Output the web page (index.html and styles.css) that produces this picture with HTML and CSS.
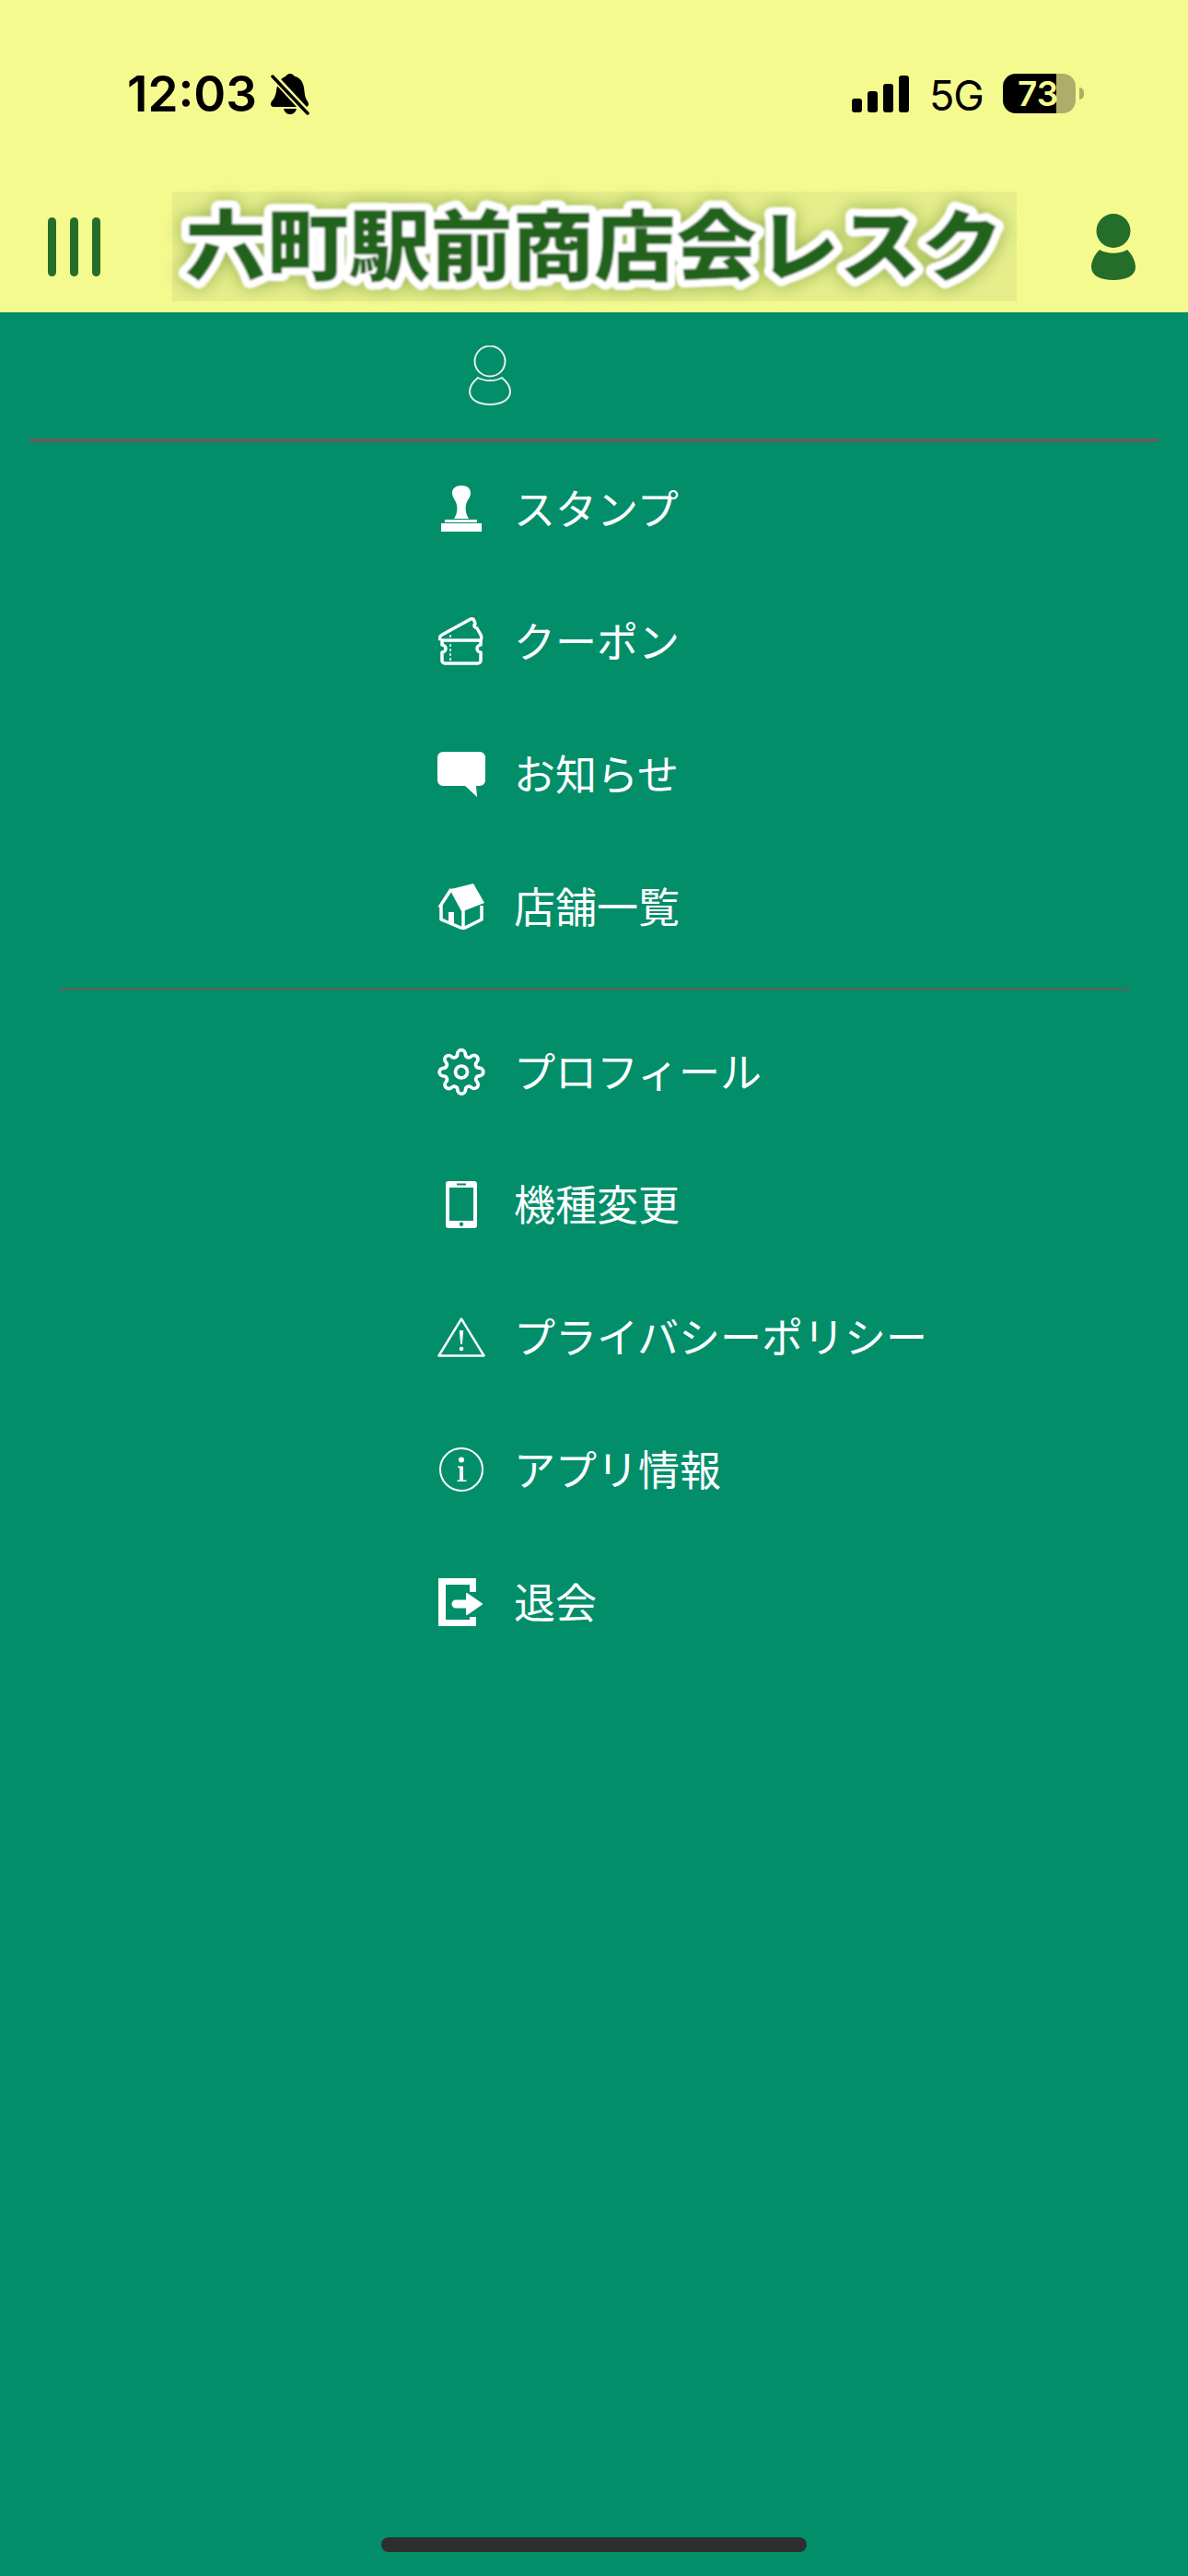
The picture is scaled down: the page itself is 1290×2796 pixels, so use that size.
FILE: index.html
```html
<!DOCTYPE html>
<html lang="ja">
<head>
    <meta charset="UTF-8">
    <meta name="viewport" content="width=device-width, initial-scale=1.0">
    <title>六町駅前商店会レスク</title>
    <link rel="stylesheet" href="styles.css">
</head>
<body>
    <div class="page">
        <header class="top">
            <div class="status">
                <div class="status-left">
                    <span class="time">12:03</span>
                    <svg class="bell" viewBox="0 0 42 45">
                        <path d="M21 0c3 0 4 2 5 3 6 1 9 6 10 12 1 7 1 11 4 15 2 3 1 6-2 6H3c-3 0-4-3-2-6 3-3 4-6 5-11 1-8 4-14 10-16 1-1 2-3 5-3z"/>
                        <path d="M14 38h14c-1 4-4 6-7 6s-6-2-7-6z"/>
                        <path class="bell-gap" d="M0 0l41 44"/>
                        <path class="bell-slash" d="M2 3l38 40"/>
                    </svg>
                </div>
                <div class="status-right">
                    <div class="signal"><i class="b1"></i><i class="b2"></i><i class="b3"></i><i class="b4"></i></div>
                    <span class="net">5G</span>
                    <div class="battery"><span class="battery-num">73</span></div>
                    <div class="battery-nub"></div>
                </div>
            </div>
            <div class="nav">
                <div class="burger"><i></i><i></i><i></i></div>
                <div class="logo">
                    <svg viewBox="0 0 917 119">
                        <defs>
                            <filter id="glow" x="-5%" y="-30%" width="110%" height="160%">
                                <feGaussianBlur in="SourceAlpha" stdDeviation="10" result="b"/>
                                <feFlood flood-color="#7d9f38" flood-opacity="0.8"/>
                                <feComposite in2="b" operator="in" result="g"/>
                                <feGaussianBlur in="SourceGraphic" stdDeviation="0.9" result="s"/>
                                <feMerge>
                                    <feMergeNode in="g"/>
                                    <feMergeNode in="s"/>
                                </feMerge>
                            </filter>
                        </defs>
                        <text class="logo-text" x="14" y="90" textLength="888" lengthAdjust="spacingAndGlyphs" filter="url(#glow)">六町駅前商店会レスク</text>
                    </svg>
                </div>
                <svg class="nav-user" viewBox="0 0 48 72">
                    <circle cx="24" cy="18.5" r="18.5"/>
                    <path d="M9 39c8 5 22 5 30 0 5 5 9 12 9 19 0 9-10 14-24 14S0 67 0 58c0-7 4-14 9-19z"/>
                </svg>
            </div>
        </header>

        <main class="menu">
            <div class="user">
                <svg class="user-icon" viewBox="0 0 46 66">
                    <circle cx="23" cy="17" r="16.5"/>
                    <path d="M10 35c7 4 19 4 26 0 5 4 9 10 9 15 0 9-10 14-22 14S1 59 1 50c0-5 4-11 9-15z"/>
                </svg>
            </div>
            <hr class="rule-main">
            <ul class="group">
                <li class="item">
                    <span class="icon">
                        <svg width="44" height="50" viewBox="0 0 44 50">
                            <path class="fill" d="M22 0c6 0 10 3 10 8 0 5-4 8-5 13-1 6 0 10 3 15H14c3-5 4-9 3-15-1-5-5-8-5-13 0-5 4-8 10-8z"/>
                            <rect class="fill" x="4" y="37" width="35" height="3"/>
                            <rect class="fill" y="41" width="44" height="9"/>
                        </svg>
                    </span>
                    <span class="label">スタンプ</span>
                </li>
                <li class="item">
                    <span class="icon">
                        <svg width="50" height="52" viewBox="0 0 50 52">
                            <path class="line thick" d="M4 25h42v5a4 4 0 0 0 0 8v9a3 3 0 0 1-3 3H7a3 3 0 0 1-3-3v-9a4 4 0 0 0 0-8z"/>
                            <path class="line thick" d="M2 25c-1-3 0-5 2-6L35 2c2-1 3 0 4 2l1 3c-2 2-1 4 2 5l4 7c1 2 1 4 0 6"/>
                            <path class="line dashed" d="M13 19v31"/>
                        </svg>
                    </span>
                    <span class="label">クーポン</span>
                </li>
                <li class="item">
                    <span class="icon">
                        <svg width="52" height="49" viewBox="0 0 52 49">
                            <path class="fill" d="M6 0h40a6 6 0 0 1 6 6v25a6 6 0 0 1-6 6h-4l1 12-13-12H6a6 6 0 0 1-6-6V6a6 6 0 0 1 6-6z"/>
                        </svg>
                    </span>
                    <span class="label">お知らせ</span>
                </li>
                <li class="item">
                    <span class="icon">
                        <svg width="52" height="50" viewBox="0 0 52 50">
                            <path class="fill" d="M15 6L39 0l12 21-23 9z"/>
                            <path class="line thick" d="M15 6L2 26M15 6l13 24v19M4 24v15l24 10 20-10V24"/>
                            <rect class="fill" x="12" y="31" width="6" height="12"/>
                        </svg>
                    </span>
                    <span class="label">店舗一覧</span>
                </li>
            </ul>
            <hr class="rule-sub">
            <ul class="group">
                <li class="item">
                    <span class="icon">
                        <svg class="line gear" width="55" height="55" viewBox="0 0 24 24">
                            <circle cx="12" cy="12" r="3"/>
                            <path d="M19.4 15a1.65 1.65 0 0 0 .33 1.82l.06.06a2 2 0 0 1 0 2.83 2 2 0 0 1-2.83 0l-.06-.06a1.65 1.65 0 0 0-1.82-.33 1.65 1.65 0 0 0-1 1.51V21a2 2 0 0 1-2 2 2 2 0 0 1-2-2v-.09A1.65 1.65 0 0 0 9 19.4a1.65 1.65 0 0 0-1.82.33l-.06.06a2 2 0 0 1-2.83 0 2 2 0 0 1 0-2.83l.06-.06a1.65 1.65 0 0 0 .33-1.82 1.65 1.65 0 0 0-1.51-1H3a2 2 0 0 1-2-2 2 2 0 0 1 2-2h.09A1.65 1.65 0 0 0 4.6 9a1.65 1.65 0 0 0-.33-1.82l-.06-.06a2 2 0 0 1 0-2.83 2 2 0 0 1 2.83 0l.06.06a1.65 1.65 0 0 0 1.82.33H9a1.65 1.65 0 0 0 1-1.51V3a2 2 0 0 1 2-2 2 2 0 0 1 2 2v.09a1.65 1.65 0 0 0 1 1.51 1.65 1.65 0 0 0 1.82-.33l.06-.06a2 2 0 0 1 2.83 0 2 2 0 0 1 0 2.83l-.06.06a1.65 1.65 0 0 0-.33 1.82V9a1.65 1.65 0 0 0 1.51 1H21a2 2 0 0 1 2 2 2 2 0 0 1-2 2h-.09a1.65 1.65 0 0 0-1.51 1z"/>
                        </svg>
                    </span>
                    <span class="label">プロフィール</span>
                </li>
                <li class="item">
                    <span class="icon">
                        <svg width="34" height="51" viewBox="0 0 34 51">
                            <path class="fill" fill-rule="evenodd" d="M3 0h28a3 3 0 0 1 3 3v45a3 3 0 0 1-3 3H3a3 3 0 0 1-3-3V3a3 3 0 0 1 3-3zM4 7v36h26V7zM12 2.500v2h10v-2zM17 44.500a2.200 2.200 0 1 0 0 4.400 2.200 2.200 0 0 0 0-4.400z"/>
                        </svg>
                    </span>
                    <span class="label">機種変更</span>
                </li>
                <li class="item">
                    <span class="icon">
                        <svg width="52" height="43" viewBox="0 0 52 43">
                            <path class="line mid" d="M26 1.500L1.500 41.500h49z"/>
                            <path class="fill" d="M23.800 14h4.400l-1.300 15h-1.800z"/>
                            <circle class="fill" cx="26" cy="34" r="2.300"/>
                        </svg>
                    </span>
                    <span class="label">プライバシーポリシー</span>
                </li>
                <li class="item">
                    <span class="icon">
                        <svg width="48" height="48" viewBox="0 0 48 48">
                            <circle class="line slim" cx="24" cy="24" r="23"/>
                            <circle class="fill" cx="24" cy="13.500" r="3"/>
                            <path class="fill" d="M20 20.500h6v15h3.500V37h-10v-1.500H22v-13.500h-2z"/>
                        </svg>
                    </span>
                    <span class="label">アプリ情報</span>
                </li>
                <li class="item">
                    <span class="icon">
                        <svg width="50" height="52" viewBox="0 0 50 52">
                            <path class="fill" d="M0 0h41v15h-7V7H8v38h26v-3h7v10H0z"/>
                            <path class="fill arrow" d="M19 24.500h12V17l16 11-16 11v-7.500H19a3.500 3.500 0 0 1 0-7z"/>
                        </svg>
                    </span>
                    <span class="label">退会</span>
                </li>
            </ul>
            <div class="home-bar"></div>
        </main>
    </div>
</body>
</html>
```

FILE: styles.css
```css
* {
    box-sizing: border-box;
}
body {
    margin: 0;
    font-family: "Noto Sans CJK JP", "Noto Sans", sans-serif;
    background-color: #038e6a;
}
.page {
    width: 1290px;
    height: 2796px;
    display: flex;
    flex-direction: column;
    overflow: hidden;
}

/* top yellow area */
.top {
    height: 339px;
    background-color: #f5fa8f;
}
.status {
    height: 208px;
    padding: 80px 113px 0 138px;
    display: flex;
    justify-content: space-between;
    align-items: flex-start;
}
.status-left {
    display: flex;
    align-items: center;
    gap: 15px;
    height: 45px;
}
.time {
    font-family: Inter, sans-serif;
    font-size: 53px;
    font-weight: 600;
    line-height: 45px;
    color: #000;
}
.bell {
    width: 42px;
    height: 45px;
}
.bell-gap {
    fill: none;
    stroke: #f5fa8f;
    stroke-width: 8;
}
.bell-slash {
    fill: none;
    stroke: #000;
    stroke-width: 3.5;
    stroke-linecap: round;
}
.status-right {
    display: flex;
    align-items: flex-start;
    height: 45px;
}
.signal {
    width: 62px;
    height: 40px;
    margin-top: 2px;
    display: flex;
    align-items: flex-end;
    justify-content: space-between;
}
.signal i {
    width: 11px;
    border-radius: 3px;
    background-color: #000;
}
.b1 { height: 15px; }
.b2 { height: 23px; }
.b3 { height: 31px; }
.b4 { height: 40px; }
.net {
    margin-left: 22px;
    width: 80px;
    font-family: Inter, sans-serif;
    font-size: 45px;
    line-height: 44px;
    color: #000;
    height: 44px;
    padding-top: 2px;
    letter-spacing: -1px;
}
.battery {
    width: 79px;
    height: 43px;
    border-radius: 14px;
    background: linear-gradient(90deg, #000 0, #000 58px, #aeae6b 58px);
    padding-left: 16px;
    color: #f5fa8f;
    font-family: Inter, sans-serif;
    font-size: 37px;
    font-weight: 600;
    line-height: 43px;
}
.battery-nub {
    width: 5px;
    height: 13px;
    margin: 15px 0 0 4px;
    border-radius: 0 7px 7px 0;
    background-color: #aeae6b;
}
.nav {
    height: 131px;
    padding-left: 52px;
    display: flex;
    align-items: flex-start;
}
.burger {
    width: 57px;
    height: 64px;
    margin-top: 28px;
    display: flex;
    justify-content: space-between;
}
.burger i {
    width: 9px;
    border-radius: 5px;
    background-color: #246e2a;
}
.logo {
    width: 917px;
    height: 119px;
    margin-left: 78px;
    background-color: #e6ee8c;
}
.logo svg {
    display: block;
    width: 917px;
    height: 119px;
    overflow: visible;
}
.logo-text {
    font-family: "Noto Sans CJK JP", sans-serif;
    font-size: 84px;
    font-weight: 900;
    fill: #21631f;
    stroke: #fff;
    stroke-width: 16px;
    stroke-linejoin: round;
    paint-order: stroke fill;
}
.nav-user {
    width: 48px;
    height: 72px;
    margin: 24px 0 0 81px;
    fill: #246e2a;
}

/* green menu */
.menu {
    flex: 1;
    display: flex;
    flex-direction: column;
    background-color: #038e6a;
}
.user {
    height: 137px;
    padding: 36px 0 0 509px;
}
.user-icon {
    display: block;
    width: 46px;
    height: 66px;
    fill: none;
    stroke: #e6f0ea;
    stroke-width: 2;
}
hr {
    border: none;
    margin: 0;
}
.rule-main {
    height: 4px;
    margin: 0 32px;
    background-color: #5e5e5e;
}
.rule-sub {
    height: 3px;
    margin: 16px 63px 16px 64px;
    background-color: #4a6a5c;
}
.group {
    list-style: none;
    margin: 0;
    padding: 0;
}
.item {
    height: 144px;
    padding-left: 475px;
    display: flex;
    align-items: center;
    color: #fff;
}
.icon {
    width: 52px;
    height: 55px;
    margin-right: 31px;
    display: flex;
    align-items: center;
    justify-content: center;
}
.label {
    font-size: 45px;
    line-height: 60px;
    white-space: nowrap;
    padding-bottom: 3px;
}
.fill {
    fill: #fff;
}
.line {
    fill: none;
    stroke: #fff;
    stroke-linejoin: round;
}
.thick {
    stroke-width: 3.5;
}
.mid {
    stroke-width: 2.4;
}
.slim {
    stroke-width: 2;
}
.dashed {
    stroke-width: 1.5;
    stroke-dasharray: 3 2;
}
.gear {
    stroke-width: 1.7;
}
.arrow {
    stroke: #fff;
    stroke-width: 2;
    stroke-linejoin: round;
}
.home-bar {
    width: 462px;
    height: 16px;
    margin: auto 0 26px 414px;
    border-radius: 8px;
    background-color: #2e2e2e;
}
```
